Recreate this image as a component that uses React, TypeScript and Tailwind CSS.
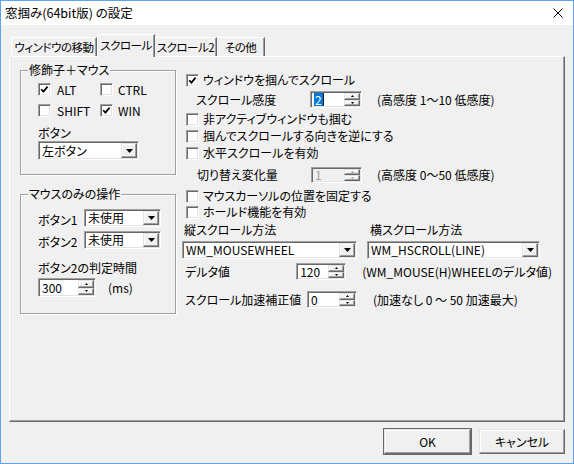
import React from "react";

const sunken =
  "border border-t-[#a0a0a0] border-l-[#a0a0a0] border-r-white border-b-white shadow-[inset_1px_1px_0_#696969,inset_-1px_-1px_0_#e3e3e3]";
const raised =
  "border border-t-[#e3e3e3] border-l-[#e3e3e3] border-r-[#696969] border-b-[#696969] shadow-[inset_-1px_-1px_0_#a0a0a0,inset_1px_1px_0_#ffffff] bg-[#f0f0f0]";

function Check({ checked }: { checked?: boolean }) {
  return (
    <span
      className={`${sunken} w-[13px] h-[13px] bg-white flex items-center justify-center shrink-0`}
    >
      {checked && (
        <svg width="9" height="9" viewBox="0 0 9 9">
          <path d="M1.2 4.2 L3.4 6.6 L7.6 1.6" stroke="#000" strokeWidth="1.7" fill="none" />
        </svg>
      )}
    </span>
  );
}

function Combo({ className, text }: { className: string; text: string }) {
  return (
    <div className={`${sunken} ${className} bg-white flex p-[1px] shrink-0`}>
      <div className="flex-1 flex items-center pl-[2px] whitespace-nowrap leading-[12px]">{text}</div>
      <div className={`${raised} w-[16px] h-full flex items-center justify-center`}>
        <svg width="7" height="4" viewBox="0 0 7 4">
          <path d="M0 0H7L3.5 4Z" fill="#000" />
        </svg>
      </div>
    </div>
  );
}

function Spin({
  className,
  text,
  disabled,
  selected,
}: {
  className: string;
  text: string;
  disabled?: boolean;
  selected?: boolean;
}) {
  const arrow = disabled ? "#a0a0a0" : "#000";
  return (
    <div className={`${sunken} ${className} ${disabled ? "bg-[#f0f0f0]" : "bg-white"} flex p-[1px] shrink-0`}>
      <div className={`flex-1 flex items-center pl-[2px] leading-[12px] ${disabled ? "text-[#a0a0a0]" : ""}`}>
        {selected ? (
          <>
            <span className="bg-[#0078d7] text-white px-[1px] leading-[13px]">{text}</span>
            <span className="w-[1px] h-[13px] bg-[#222]" />
          </>
        ) : (
          text
        )}
      </div>
      <div className="w-[16px] h-full flex flex-col">
        <div className={`${raised} flex-1 flex items-center justify-center`}>
          <svg width="3" height="2" viewBox="0 0 3 2">
            <path d="M0 2H3L1.5 0Z" fill={arrow} />
          </svg>
        </div>
        <div className={`${raised} flex-1 flex items-center justify-center`}>
          <svg width="3" height="2" viewBox="0 0 3 2">
            <path d="M0 0H3L1.5 2Z" fill={arrow} />
          </svg>
        </div>
      </div>
    </div>
  );
}

function Group({ title, className, children }: { title: string; className: string; children: React.ReactNode }) {
  return (
    <div
      className={`relative border border-[#a0a0a0] shadow-[inset_1px_1px_0_#fff,1px_1px_0_#fff] ${className}`}
    >
      <span className="absolute left-[7px] -top-[8px] px-[1px] bg-[#f0f0f0] leading-[14px] whitespace-nowrap">
        {title}
      </span>
      {children}
    </div>
  );
}

function CheckRow({ label, checked, className }: { label: string; checked?: boolean; className: string }) {
  return (
    <div className={`flex items-center h-[16px] pl-[4px] gap-[4px] whitespace-nowrap ${className}`}>
      <Check checked={checked} />
      <span>{label}</span>
    </div>
  );
}

export default function App() {
  return (
    <div className="w-[574px] h-[464px] border border-[#5ca4ec] bg-[#f0f0f0] flex flex-col overflow-hidden text-black text-[12px] leading-[14px] font-['Noto_Sans_CJK_JP','Noto_Sans',sans-serif] [font-feature-settings:'palt']">
      {/* title bar */}
      <div className="h-[24px] shrink-0 bg-white flex items-center justify-between pl-[4px] pr-[10px]">
        <span className="text-[12.5px] leading-[14px] -mt-[1px]">窓掴み(64bit版) の設定</span>
        <svg width="10" height="10" viewBox="0 0 10 10" className="-mt-[1px]">
          <path d="M0.5 0.5L9.5 9.5M9.5 0.5L0.5 9.5" stroke="#000" strokeWidth="1" />
        </svg>
      </div>

      {/* tabs */}
      <div className="mt-[9px] pl-[10px] flex items-end h-[22px] shrink-0 text-[11.5px] tracking-[-0.5px]">
        <div className="w-[86px] h-[19px] border-t border-l border-t-white border-l-white border-r border-r-[#696969] shadow-[inset_-1px_0_0_#a0a0a0] rounded-tl-[2px] flex items-center justify-center whitespace-nowrap">
          ウィンドウの移動
        </div>
        <div className="relative z-10 w-[58px] h-[23px] -mb-[1px] bg-[#f0f0f0] border-t border-l border-t-white border-l-white border-r border-r-[#696969] shadow-[inset_-1px_0_0_#a0a0a0] rounded-tl-[2px] flex justify-center pt-[3px] whitespace-nowrap">
          スクロール
        </div>
        <div className="w-[62px] h-[19px] border-t border-t-white border-r border-r-[#696969] shadow-[inset_-1px_0_0_#a0a0a0] flex items-center justify-center whitespace-nowrap">
          スクロール2
        </div>
        <div className="w-[48px] h-[19px] border-t border-t-white border-r border-r-[#696969] shadow-[inset_-1px_0_0_#a0a0a0] flex items-center justify-center whitespace-nowrap">
          その他
        </div>
      </div>

      {/* panel */}
      <div className="ml-[8px] w-[556px] h-[366px] shrink-0 border border-t-white border-l-white border-r-[#696969] border-b-[#696969] shadow-[inset_-1px_-1px_0_#a0a0a0] flex pl-[10px]">
        {/* left column */}
        <div className="w-[156px] flex flex-col shrink-0">
          <Group title="修飾子＋マウス" className="mt-[13px] h-[105px] flex flex-col pl-[17px]">
            <div className="mt-[12px] h-[13px] flex items-center">
              <div className="w-[62px] flex items-center gap-[6px]">
                <Check checked />
                <span>ALT</span>
              </div>
              <div className="flex items-center gap-[5px]">
                <Check />
                <span>CTRL</span>
              </div>
            </div>
            <div className="mt-[8px] h-[13px] flex items-center">
              <div className="w-[62px] flex items-center gap-[6px]">
                <Check />
                <span>SHIFT</span>
              </div>
              <div className="flex items-center gap-[5px]">
                <Check checked />
                <span>WIN</span>
              </div>
            </div>
            <div className="mt-[9px] h-[14px]">ボタン</div>
            <Combo className="mt-[1px] w-[101px] h-[19px]" text="左ボタン" />
          </Group>

          <Group title="マウスのみの操作" className="mt-[19px] h-[120px] flex flex-col pl-[17px]">
            <div className="mt-[14px] flex items-center h-[18px]">
              <span className="w-[46px] mt-[3px]">ボタン1</span>
              <Combo className="w-[77px] h-[18px]" text="未使用" />
            </div>
            <div className="mt-[4px] flex items-center h-[18px]">
              <span className="w-[46px] mt-[3px]">ボタン2</span>
              <Combo className="w-[77px] h-[18px]" text="未使用" />
            </div>
            <div className="mt-[12px] h-[14px]">ボタン2の判定時間</div>
            <div className="mt-[3px] flex items-center h-[19px] gap-[12px]">
              <Spin className="w-[58px] h-[19px]" text="300" />
              <span>(ms)</span>
            </div>
          </Group>
        </div>

        {/* right column */}
        <div className="ml-[6px] flex flex-col pt-[15px] w-[370px]">
          <CheckRow label="ウィンドウを掴んでスクロール" checked className="" />
          <div className="mt-[3px] h-[17px] flex items-center pl-[14px] whitespace-nowrap">
            <span className="w-[114px]">スクロール感度</span>
            <Spin className="w-[52px] h-[17px]" text="2" selected />
            <span className="ml-[15px]">(高感度 1〜10 低感度)</span>
          </div>
          <CheckRow label="非アクティブウィンドウも掴む" className="mt-[3px]" />
          <CheckRow label="掴んでスクロールする向きを逆にする" className="mt-[1px]" />
          <CheckRow label="水平スクロールを有効" className="mt-[1px]" />
          <div className="mt-[5px] h-[17px] flex items-center pl-[15px] whitespace-nowrap">
            <span className="w-[114px]">切り替え変化量</span>
            <Spin className="w-[51px] h-[16px]" text="1" disabled />
            <span className="ml-[15px]">(高感度 0〜50 低感度)</span>
          </div>
          <CheckRow label="マウスカーソルの位置を固定する" className="mt-[5px]" />
          <CheckRow label="ホールド機能を有効" className="" />
          <div className="mt-[2px] h-[16px] flex items-center whitespace-nowrap">
            <span className="w-[188px] pl-[2px]">縦スクロール方法</span>
            <span>横スクロール方法</span>
          </div>
          <div className="mt-[3px] h-[18px] flex items-center gap-[10px]">
            <Combo className="w-[175px] h-[18px]" text="WM_MOUSEWHEEL" />
            <Combo className="w-[173px] h-[18px]" text="WM_HSCROLL(LINE)" />
          </div>
          <div className="mt-[4px] h-[17px] flex items-center whitespace-nowrap">
            <span className="w-[125px] pl-[3px]">デルタ値</span>
            <Spin className="w-[50px] h-[17px]" text="120" />
            <span className="ml-[16px]">(WM_MOUSE(H)WHEELのデルタ値)</span>
          </div>
          <div className="mt-[11px] h-[17px] flex items-center whitespace-nowrap">
            <span className="w-[125px] pl-[3px]">スクロール加速補正値</span>
            <Spin className="w-[50px] h-[17px]" text="0" />
            <span className="ml-[16px]">(加速なし 0 〜 50 加速最大)</span>
          </div>
        </div>
      </div>

      {/* buttons */}
      <div className="mt-[7px] flex justify-end gap-[8px] pr-[8px] shrink-0">
        <div className={`${raised} w-[87px] h-[25px] flex items-center justify-center outline outline-1 outline-[#696969]`}>
          OK
        </div>
        <div className={`${raised} w-[86px] h-[25px] flex items-center justify-center`}>キャンセル</div>
      </div>
    </div>
  );
}
